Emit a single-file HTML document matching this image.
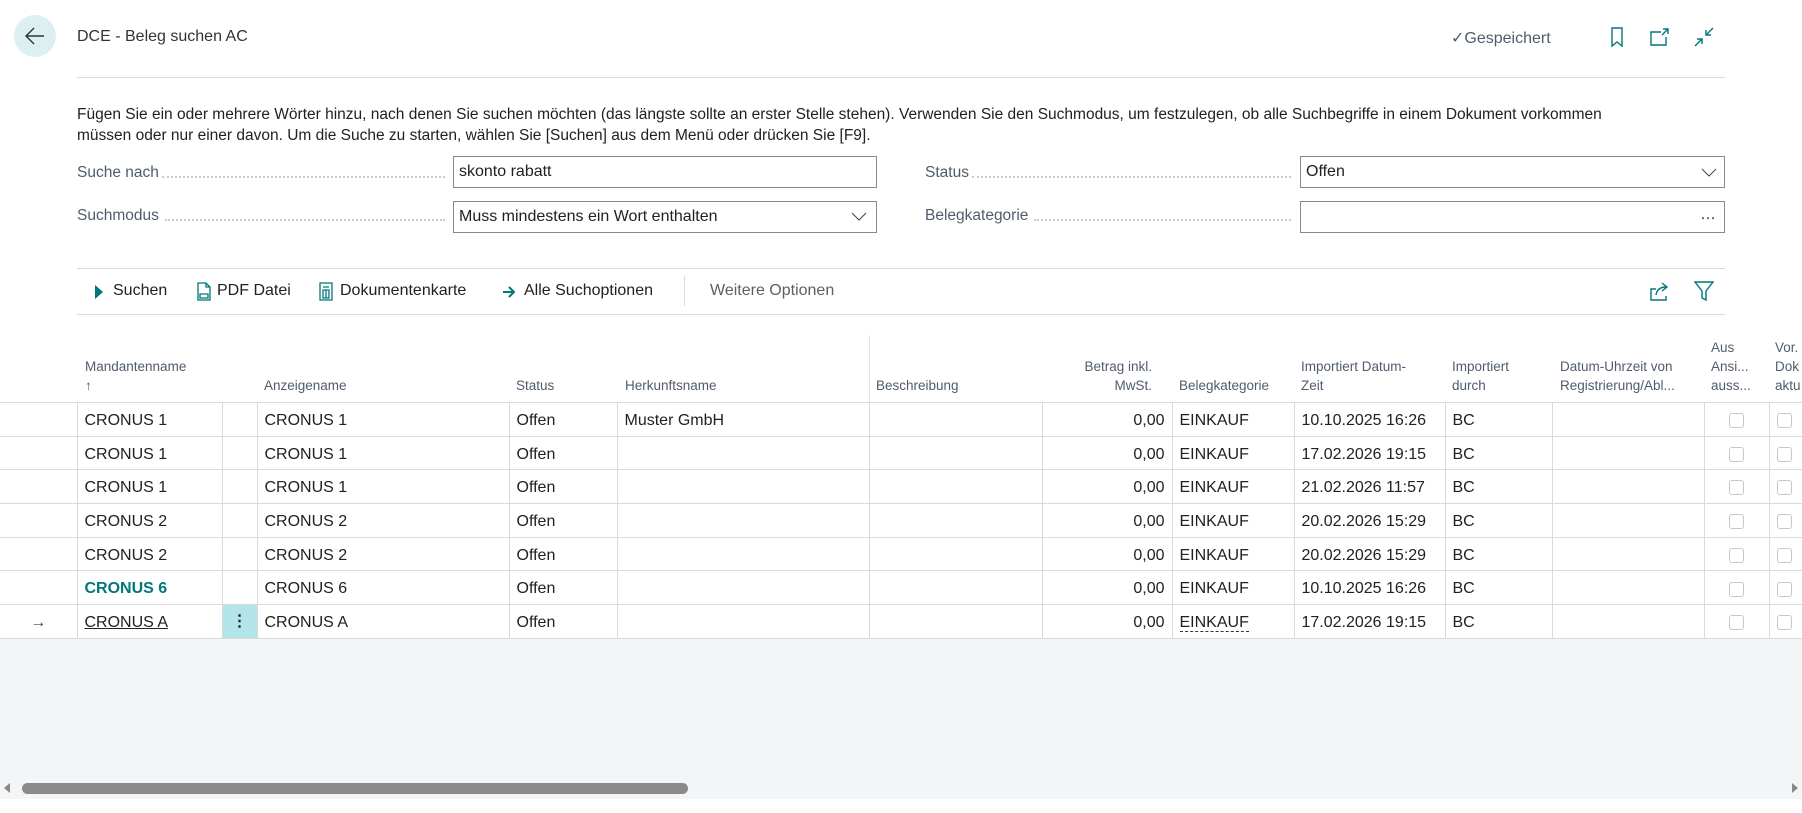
<!DOCTYPE html>
<html><head><meta charset="utf-8"><style>
*{box-sizing:border-box;margin:0;padding:0}
body{width:1802px;height:813px;background:#fff;font-family:"Segoe UI","Liberation Sans",sans-serif;color:#212121;position:relative;overflow:hidden}
.a{position:absolute;white-space:nowrap}
.lbl{font-size:15.5px;color:#505c6d}
.dots{position:absolute;border-bottom:2px dotted #c8cacc;height:0}
.box{position:absolute;border:1px solid #8a8886;background:#fff;font-size:16px;padding:0 5px;line-height:30px;height:32px}
.tb{font-size:16px;color:#212121}
.hd{position:absolute;font-size:13.5px;color:#505c6d;line-height:19px}
table{position:absolute;left:0;top:402px;width:1829px;border-collapse:collapse;table-layout:fixed;font-size:16px}
td{height:33.7px;border-top:1px solid #d9dadb;border-bottom:1px solid #d9dadb;border-left:1px solid #d9dadb;padding:3px 7px 0;white-space:nowrap;overflow:hidden}
td:first-child{border-left:none}
td.r{text-align:right}
.cb{display:inline-block;width:15px;height:15px;border:1px solid #c8c8c8;border-radius:3px;vertical-align:middle}
</style></head><body>
<div class="a" style="left:14px;top:15px;width:42px;height:42px;border-radius:50%;background:#dcf0f2"></div>
<svg class="a" style="left:24px;top:26px" width="22" height="20" viewBox="0 0 22 20"><path d="M20 10H3M10 2L2 10l8 8" stroke="#333" stroke-width="1.4" fill="none"/></svg>
<div class="a" style="left:77px;top:28px;font-size:16px;color:#333">DCE - Beleg suchen AC</div>
<div class="a" style="left:1451px;top:28px;font-size:16px;color:#505c6d">✓Gespeichert</div>
<svg class="a" style="left:1609px;top:26px" width="16" height="22" viewBox="0 0 16 22"><path d="M3 2h10v18l-5-4-5 4z" stroke="#00777b" stroke-width="1.4" fill="none"/></svg>
<svg class="a" style="left:1649px;top:27px" width="22" height="20" viewBox="0 0 22 20"><path d="M12 5H2v13h15v-8M14 2h5v5M19 2l-6 6" stroke="#00777b" stroke-width="1.4" fill="none"/></svg>
<svg class="a" style="left:1693px;top:26px" width="22" height="22" viewBox="0 0 22 22"><path d="M20 2l-7 7M13 4v5h5M2 20l7-7M4 13h5v5" stroke="#00777b" stroke-width="1.4" fill="none"/></svg>
<div class="a" style="left:77px;top:77px;width:1648px;border-top:1px solid #d9dadb"></div>

<div class="a" style="left:77px;top:104px;font-size:15.5px;line-height:21px;color:#212121;white-space:normal;width:1570px">Fügen Sie ein oder mehrere Wörter hinzu, nach denen Sie suchen möchten (das längste sollte an erster Stelle stehen). Verwenden Sie den Suchmodus, um festzulegen, ob alle Suchbegriffe in einem Dokument vorkommen müssen oder nur einer davon. Um die Suche zu starten, wählen Sie [Suchen] aus dem Menü oder drücken Sie [F9].</div>

<div class="a lbl" style="left:77px;top:164px">Suche nach</div><div class="dots" style="left:162px;width:283px;top:176px"></div>
<div class="box" style="left:453px;top:156px;width:424px">skonto rabatt</div>
<div class="a lbl" style="left:77px;top:207px">Suchmodus</div><div class="dots" style="left:165px;width:280px;top:219px"></div>
<div class="box" style="left:453px;top:201px;width:424px">Muss mindestens ein Wort enthalten</div>
<svg class="a" style="left:851px;top:212px" width="16" height="10"><path d="M1 1l7 7 7-7" stroke="#444" fill="none"/></svg>

<div class="a lbl" style="left:925px;top:164px">Status</div><div class="dots" style="left:972px;width:319px;top:176px"></div>
<div class="box" style="left:1300px;top:156px;width:425px">Offen</div>
<svg class="a" style="left:1701px;top:168px" width="16" height="10"><path d="M1 1l7 7 7-7" stroke="#444" fill="none"/></svg>
<div class="a lbl" style="left:925px;top:207px">Belegkategorie</div><div class="dots" style="left:1034px;width:257px;top:219px"></div>
<div class="box" style="left:1300px;top:201px;width:425px"><span style="position:absolute;right:8px;top:-2px">…</span></div>

<div class="a" style="left:77px;top:268px;width:1648px;border-top:1px solid #d9dadb"></div>
<div class="a" style="left:77px;top:314px;width:1648px;border-top:1px solid #d9dadb"></div>
<svg class="a" style="left:94px;top:284px" width="10" height="16"><path d="M1 1l8 7-8 7z" fill="#00777b"/></svg>
<div class="a tb" style="left:113px;top:282px">Suchen</div>
<svg class="a" style="left:196px;top:282px" width="16" height="19" viewBox="0 0 16 19"><path d="M2 1h8l4 4v13H2zM10 1v4h4M4 12h8v4H4z" stroke="#00777b" stroke-width="1.3" fill="none"/></svg>
<div class="a tb" style="left:217px;top:282px">PDF Datei</div>
<svg class="a" style="left:318px;top:281px" width="16" height="20" viewBox="0 0 16 20"><path d="M2 2h12v17H2zM5 6h6M5 9h6v8H5zM8 9v8" stroke="#00777b" stroke-width="1.3" fill="none"/></svg>
<div class="a tb" style="left:340px;top:282px">Dokumentenkarte</div>
<svg class="a" style="left:502px;top:286px" width="14" height="12"><path d="M1 6h11M7 1l5 5-5 5" stroke="#00777b" stroke-width="2" fill="none"/></svg>
<div class="a tb" style="left:524px;top:282px">Alle Suchoptionen</div>
<div class="a" style="left:684px;top:276px;height:30px;border-left:1px solid #d9dadb"></div>
<div class="a tb" style="left:710px;top:282px;color:#605e5c">Weitere Optionen</div>
<svg class="a" style="left:1649px;top:281px" width="22" height="20" viewBox="0 0 22 20"><path d="M7 8H2v11h15v-4M7 14c1-6 5-8 10-8M13 2l5 4-5 4" stroke="#00777b" stroke-width="1.4" fill="none"/></svg>
<svg class="a" style="left:1694px;top:281px" width="20" height="20" viewBox="0 0 20 20"><path d="M1 1h18l-7 9v9l-4-2v-7z" stroke="#00777b" stroke-width="1.4" fill="none"/></svg>

<div class="a" style="left:869px;top:335px;height:67px;border-left:1px solid #e3e4e5"></div>
<div class="hd" style="left:85px;top:357px">Mandantenname<br>↑</div>
<div class="hd" style="left:264px;top:376px">Anzeigename</div>
<div class="hd" style="left:516px;top:376px">Status</div>
<div class="hd" style="left:625px;top:376px">Herkunftsname</div>
<div class="hd" style="left:876px;top:376px">Beschreibung</div>
<div class="hd" style="left:1050px;top:357px;width:102px;text-align:right">Betrag inkl.<br>MwSt.</div>
<div class="hd" style="left:1179px;top:376px">Belegkategorie</div>
<div class="hd" style="left:1301px;top:357px">Importiert Datum-<br>Zeit</div>
<div class="hd" style="left:1452px;top:357px">Importiert<br>durch</div>
<div class="hd" style="left:1560px;top:357px">Datum-Uhrzeit von<br>Registrierung/Abl...</div>
<div class="hd" style="left:1711px;top:338px">Aus<br>Ansi...<br>auss...</div>
<div class="hd" style="left:1775px;top:338px">Vor.<br>Dok<br>aktu</div>

<table>
<colgroup><col style="width:77px"><col style="width:145px"><col style="width:35px"><col style="width:252px"><col style="width:108px"><col style="width:252px"><col style="width:173px"><col style="width:130px"><col style="width:122px"><col style="width:151px"><col style="width:107px"><col style="width:152px"><col style="width:65px"><col style="width:60px"></colgroup>
<tr><td></td><td>CRONUS 1</td><td></td><td>CRONUS 1</td><td>Offen</td><td>Muster GmbH</td><td></td><td class="r">0,00</td><td>EINKAUF</td><td>10.10.2025 16:26</td><td>BC</td><td></td><td style="text-align:center"><span class="cb"></span></td><td><span class="cb"></span></td></tr>
<tr><td></td><td>CRONUS 1</td><td></td><td>CRONUS 1</td><td>Offen</td><td></td><td></td><td class="r">0,00</td><td>EINKAUF</td><td>17.02.2026 19:15</td><td>BC</td><td></td><td style="text-align:center"><span class="cb"></span></td><td><span class="cb"></span></td></tr>
<tr><td></td><td>CRONUS 1</td><td></td><td>CRONUS 1</td><td>Offen</td><td></td><td></td><td class="r">0,00</td><td>EINKAUF</td><td>21.02.2026 11:57</td><td>BC</td><td></td><td style="text-align:center"><span class="cb"></span></td><td><span class="cb"></span></td></tr>
<tr><td></td><td>CRONUS 2</td><td></td><td>CRONUS 2</td><td>Offen</td><td></td><td></td><td class="r">0,00</td><td>EINKAUF</td><td>20.02.2026 15:29</td><td>BC</td><td></td><td style="text-align:center"><span class="cb"></span></td><td><span class="cb"></span></td></tr>
<tr><td></td><td>CRONUS 2</td><td></td><td>CRONUS 2</td><td>Offen</td><td></td><td></td><td class="r">0,00</td><td>EINKAUF</td><td>20.02.2026 15:29</td><td>BC</td><td></td><td style="text-align:center"><span class="cb"></span></td><td><span class="cb"></span></td></tr>
<tr><td></td><td style="color:#00777b;font-weight:bold">CRONUS 6</td><td></td><td>CRONUS 6</td><td>Offen</td><td></td><td></td><td class="r">0,00</td><td>EINKAUF</td><td>10.10.2025 16:26</td><td>BC</td><td></td><td style="text-align:center"><span class="cb"></span></td><td><span class="cb"></span></td></tr>
<tr><td style="text-align:center;color:#444">→</td><td style="text-decoration:underline">CRONUS A</td><td style="background:#b2e4ea;text-align:center;padding:0;font-weight:bold">⋮</td><td>CRONUS A</td><td>Offen</td><td></td><td></td><td class="r">0,00</td><td><span style="border-bottom:1px dashed #333">EINKAUF</span></td><td>17.02.2026 19:15</td><td>BC</td><td></td><td style="text-align:center"><span class="cb"></span></td><td><span class="cb"></span></td></tr>
</table>

<div class="a" style="left:0;top:639px;width:1802px;height:160px;background:#f4f5f6"></div>
<svg class="a" style="left:2px;top:782px" width="10" height="12"><path d="M8 1L2 6l6 5z" fill="#888"/></svg>
<div class="a" style="left:22px;top:783px;width:666px;height:11px;border-radius:6px;background:#8a8a8a"></div>
<svg class="a" style="left:1790px;top:782px" width="10" height="12"><path d="M2 1l6 5-6 5z" fill="#888"/></svg>
</body></html>
